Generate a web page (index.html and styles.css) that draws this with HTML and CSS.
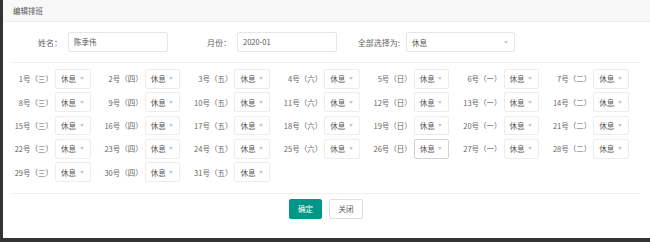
FILE: index.html
```html
<!DOCTYPE html>
<html lang="zh-CN">
<head>
    <meta charset="UTF-8">
    <meta name="viewport" content="width=device-width, initial-scale=1.0">
    <title>编辑排班</title>
    <link rel="stylesheet" href="styles.css">
</head>
<body>
    <div class="dialog">
        <div class="dialog-title">编辑排班</div>

        <div class="dialog-body">
            <div class="form-row">
                <label class="form-label short">姓名：</label>
                <div class="input">陈季伟</div>
                <label class="form-label">月份：</label>
                <div class="input">2020-01</div>
                <label class="form-label">全部选择为:</label>
                <div class="select wide"><span>休息</span><i class="caret"></i></div>
            </div>

            <div class="day-grid" id="dayGrid"></div>

            <div class="btn-row">
                <button class="btn btn-primary">确定</button>
                <button class="btn">关闭</button>
            </div>
        </div>
    </div>

    <script>
        // January 2020 starts on a Wednesday
        const weekNames = ['日', '一', '二', '三', '四', '五', '六'];
        const grid = document.getElementById('dayGrid');

        for (let d = 1; d <= 31; d++) {
            const week = weekNames[(d + 2) % 7];
            const cell = document.createElement('div');
            cell.className = 'day-cell';
            const hover = d === 26 ? ' hover' : '';
            cell.innerHTML = `<span class="day-label">${d}号（${week}）</span>` +
                `<div class="select${hover}"><span>休息</span><i class="caret"></i></div>`;
            grid.appendChild(cell);
        }
    </script>
</body>
</html>
```

FILE: styles.css
```css
body {
    margin: 0;
    background: #333;
    font-family: "Noto Sans CJK SC", "Noto Sans", sans-serif;
    overflow: hidden;
}

.dialog {
    margin-left: 3px;
    width: 647px;
    height: 238px;
    background: #fff;
}

.dialog-title {
    height: 21px;
    line-height: 21px;
    padding-left: 10px;
    background: #f8f8f8;
    border-bottom: 1px solid #eee;
    font-size: 7.5px;
    color: #555;
}

.dialog-body {
    padding: 0 10px 0 9px;
}

.form-row {
    display: flex;
    align-items: center;
    padding: 10px 0;
    border-bottom: 1px solid #f0f0f0;
}

.form-label {
    width: 69px;
    padding-right: 6px;
    box-sizing: border-box;
    text-align: right;
    font-size: 8px;
    color: #666;
}

.form-label.short { width: 56px; }

.input {
    width: 100px;
    height: 20px;
    line-height: 18px;
    padding-left: 5px;
    box-sizing: border-box;
    border: 1px solid #e6e6e6;
    border-radius: 2px;
    font-size: 7.5px;
    color: #555;
}

.select {
    display: flex;
    align-items: center;
    justify-content: space-between;
    width: 35.5px;
    height: 19.5px;
    padding: 0 6px 0 5px;
    box-sizing: border-box;
    border: 1px solid #ececec;
    border-radius: 2px;
    font-size: 7.5px;
    color: #555;
}

.select.wide {
    width: 109px;
    height: 20px;
    border-color: #e6e6e6;
}

.select.hover { border-color: #d2d2d2; }

.caret {
    width: 0;
    height: 0;
    border-top: 3px solid #c8c8c8;
    border-left: 2.5px solid transparent;
    border-right: 2.5px solid transparent;
}

.day-grid {
    display: grid;
    grid-template-columns: repeat(7, 1fr);
    row-gap: 3.85px;
    padding: 6px 0 11px;
    border-bottom: 1px solid #f0f0f0;
}

.day-cell {
    display: flex;
    align-items: center;
}

.day-label {
    width: 43px;
    padding-right: 2px;
    box-sizing: border-box;
    text-align: right;
    font-size: 7.5px;
    color: #666;
    white-space: nowrap;
}

.btn-row {
    display: flex;
    justify-content: center;
    gap: 7px;
    padding-top: 5px;
}

.btn {
    width: 34px;
    height: 20px;
    padding: 0;
    border: 1px solid #dedede;
    border-radius: 2px;
    background: #fff;
    font-family: inherit;
    font-size: 7.5px;
    color: #555;
}

.btn-primary {
    width: 33px;
    border-color: #009688;
    background: #009688;
    color: #fff;
}
```
